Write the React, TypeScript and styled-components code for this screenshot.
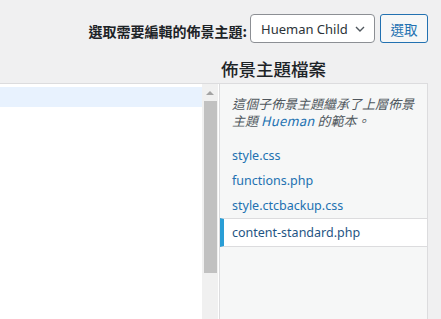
import styled, { createGlobalStyle } from "styled-components";

const files = ["style.css", "functions.php", "style.ctcbackup.css", "content-standard.php"];
const currentFile = "content-standard.php";

const GlobalStyle = createGlobalStyle`
  html, body {
    margin: 0;
    padding: 0;
    height: 100%;
    background: #f0f0f1;
    overflow: hidden;
  }
  body {
    font-family: "Noto Sans", "Noto Sans CJK TC", sans-serif;
    color: #3c434a;
  }
  #root {
    height: 100%;
  }
`;

export default function App() {
  return (
    <>
      <GlobalStyle />
      <Page>
        <ThemeForm>
          <FormLabel>選取需要編輯的佈景主題:</FormLabel>
          <Select>
            <span>Hueman Child</span>
            <svg width="10" height="6" viewBox="0 0 10 6">
              <path d="M1 1l4 4 4-4" fill="none" stroke="#50575e" strokeWidth="1.4" />
            </svg>
          </Select>
          <SelectButton>選取</SelectButton>
        </ThemeForm>
        <Layout>
          <Spacer />
          <SideHeading>佈景主題檔案</SideHeading>
          <Editor>
            <Lines>
              <ActiveLine />
            </Lines>
            <Scrollbar>
              <ArrowUp />
              <Thumb />
            </Scrollbar>
          </Editor>
          <Sidebar>
            <Notice>
              這個子佈景主題繼承了上層佈景主題 <em>Hueman</em> 的範本。
            </Notice>
            <FileList>
              {files.map((f) => (
                <FileItem key={f} $current={f === currentFile}>
                  {f}
                </FileItem>
              ))}
            </FileList>
          </Sidebar>
        </Layout>
      </Page>
    </>
  );
}

const Page = styled.div`
  display: flex;
  flex-direction: column;
  height: 100%;
`;

const ThemeForm = styled.div`
  display: flex;
  justify-content: flex-end;
  align-items: center;
  padding: 14px 13px 0 0;
`;

const FormLabel = styled.label`
  font-family: "Noto Sans CJK TC", sans-serif;
  font-size: 14px;
  font-weight: 700;
  color: #1d2327;
  margin: 5px 3px 0 0;
`;

const Select = styled.div`
  box-sizing: border-box;
  width: 125px;
  height: 29px;
  display: flex;
  align-items: center;
  justify-content: space-between;
  padding: 0 9px 0 10px;
  background: #fff;
  border: 1px solid #8c8f94;
  border-radius: 4px;
  font-size: 13px;
  color: #2c3338;
`;

const SelectButton = styled.button`
  box-sizing: border-box;
  width: 48px;
  height: 29px;
  margin-left: 5px;
  padding: 0;
  background: #f6f7f7;
  border: 1px solid #2271b1;
  border-radius: 3px;
  color: #2271b1;
  font-family: "Noto Sans CJK TC", sans-serif;
  font-size: 13.5px;
`;

const Layout = styled.div`
  flex: 1;
  display: grid;
  grid-template-columns: 219px 209px;
  grid-template-rows: auto 1fr;
`;

const Spacer = styled.div``;

const SideHeading = styled.h2`
  margin: 14px 0 2px 2px;
  font-family: "Noto Sans CJK TC", sans-serif;
  font-size: 17.5px;
  line-height: 24px;
  font-weight: 500;
  color: #1d2327;
`;

const Editor = styled.div`
  display: flex;
  background: #fff;
  border-top: 1px solid #dcdcde;
  padding-right: 1px;
`;

const Lines = styled.div`
  flex: 1;
  padding-top: 3px;
`;

const ActiveLine = styled.div`
  height: 20px;
  background: #e8f2fe;
`;

const Scrollbar = styled.div`
  width: 16px;
  background: #f0f0f0;
  display: flex;
  flex-direction: column;
  align-items: center;
`;

const ArrowUp = styled.div`
  margin-top: 7px;
  width: 0;
  height: 0;
  border-left: 4px solid transparent;
  border-right: 4px solid transparent;
  border-bottom: 4px solid #a3a3a3;
`;

const Thumb = styled.div`
  margin-top: 6px;
  width: 13px;
  height: 172px;
  background: #c1c1c1;
`;

const Sidebar = styled.div`
  background: #f6f7f7;
  border: 1px solid #dcdcde;
  border-bottom: none;
`;

const Notice = styled.p`
  margin: 0;
  padding: 12px 8px 0 12px;
  font-family: "Noto Sans CJK TC", sans-serif;
  font-size: 13px;
  line-height: 16.5px;
  font-style: italic;
  color: #50575e;

  em {
    color: #2271b1;
    letter-spacing: 0.3px;
  }
`;

const FileList = styled.ul`
  list-style: none;
  margin: 14px 0 0;
  padding: 0;
`;

const FileItem = styled.li<{ $current?: boolean }>`
  font-size: 12.5px;
  line-height: 19px;
  padding: ${({ $current }) => ($current ? "4px 12px 4px 8px" : "3px 12px")};
  color: ${({ $current }) => ($current ? "#1f5584" : "#2271b1")};
  background: ${({ $current }) => ($current ? "#fff" : "transparent")};
  border-top: ${({ $current }) => ($current ? "1px solid #dcdcde" : "none")};
  border-bottom: ${({ $current }) => ($current ? "1px solid #dcdcde" : "none")};
  border-left: ${({ $current }) => ($current ? "4px solid #2a9ed6" : "none")};
`;
